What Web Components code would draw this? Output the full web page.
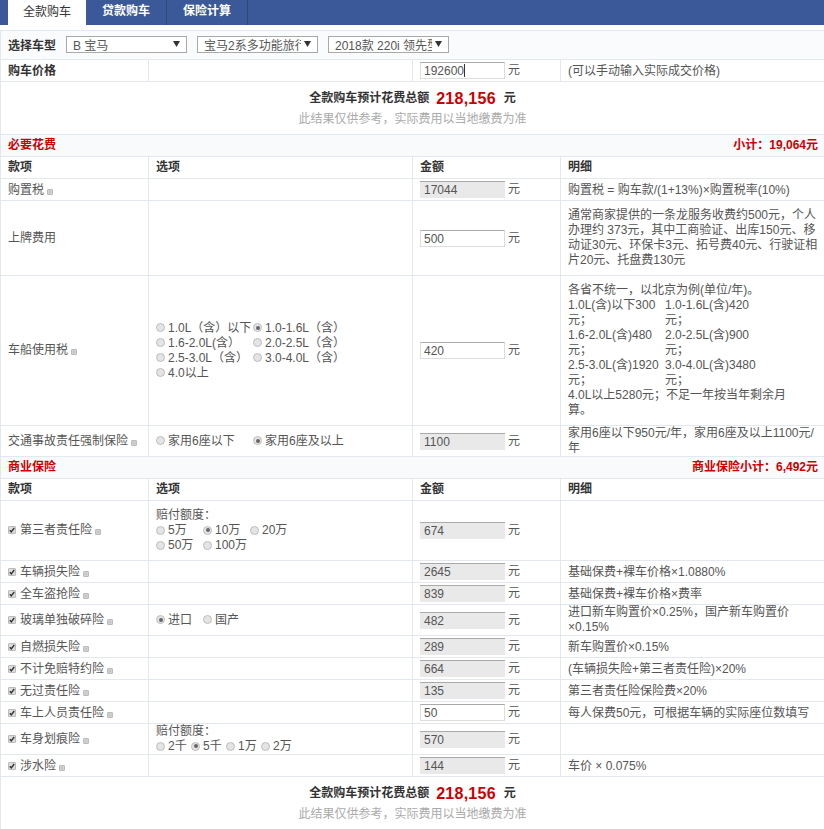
<!DOCTYPE html>
<html lang="zh"><head><meta charset="utf-8"><title>全款购车</title>
<style>
html,body{margin:0;padding:0;background:#fff}
body{width:824px;height:829px;overflow:hidden;font:12px/15px "Liberation Sans","Noto Sans CJK SC",sans-serif;color:#555}
b{color:#333}
x-row:not([h]):has(x-money) > [slot=a], x-row:not([h]):has(x-money) > [slot=d]{padding-top:2px}
</style></head><body>
<template id="t-row"><style>
:host{display:grid;grid-template-columns:148px 264px 148px 1fr;box-sizing:border-box;border-bottom:1px solid #e3e7ee;border-left:1px solid #e3e7ee;height:var(--h,22px)}
.c{display:flex;align-items:center;box-sizing:border-box;border-right:1px solid #e3e7ee;padding-left:7px;min-width:0}
.b{padding-left:7px}.m{padding-left:7px}.d{border-right:0;padding-left:7px;padding-right:4px}
</style><div class="c"><slot name="a"></slot></div><div class="c b"><slot name="b"></slot></div><div class="c m"><slot name="c"></slot></div><div class="c d"><slot name="d"></slot></div></template>

<template id="t-tabs"><style>
:host{display:flex;height:25px;background:#3b5998;padding-left:8px;margin-bottom:5px}
</style><slot></slot></template>
<template id="t-tab"><style>
:host{display:flex;box-sizing:border-box;width:81px;height:25px;padding:3px 0 0 16px;font-weight:bold;color:#fff;border-right:1px solid #2d4778;line-height:16px}
:host([active]){background:#fff;color:#333;font-weight:normal;width:78px;height:26px;border:0;padding:4px 0 0 15px}
</style><slot></slot></template>

<template id="t-select"><style>
:host{display:block;position:relative;box-sizing:border-box;width:121px;height:17px;background:#fff;border:1px solid #a9a9a9;overflow:hidden;color:#555}
.t{display:block;width:97px;height:15px;margin-left:6px;white-space:nowrap;overflow:hidden;line-height:18px;font-size:12px}
svg{position:absolute;right:6px;top:4px}
</style><span class="t"><slot></slot></span><svg width="7" height="6" viewBox="0 0 7 6"><path d="M0 0H7L3.5 6Z" fill="#333"/></svg></template>

<template id="t-pick"><style>
:host{display:flex;align-items:center;box-sizing:border-box;height:30px;border:solid #e3e7ee;border-width:1px 0 1px 1px;padding:0 0 1px 7px;background:#fafbfc;gap:10px}
.l{width:48px;white-space:nowrap;font-weight:bold;color:#333;padding-top:3px}
</style><span class="l"><slot name="label"></slot></span><slot></slot></template>

<template id="t-section"><style>
:host{display:flex;align-items:center;justify-content:space-between;box-sizing:border-box;height:22px;border-bottom:1px solid #e3e7ee;border-left:1px solid #e3e7ee;padding:0 6px 0 7px;background:#f8fafc;color:#c00;font-weight:bold}
</style><slot name="l"></slot><slot name="r"></slot></template>

<template id="t-total"><style>
:host{display:block;box-sizing:border-box;height:53px;border-bottom:1px solid #e3e7ee;border-left:1px solid #e3e7ee;text-align:center;padding-top:6px;background:#fff}
.top{display:flex;justify-content:center;align-items:center;height:20px;font-weight:bold;color:#333}
.num{font-size:16px;color:#c00;margin:0 8px 0 7px;letter-spacing:.25px}
.note{margin-top:4px;color:#aaa}
</style><div class="top"><span>全款购车预计花费总额</span><span class="num"><slot></slot></span><span>元</span></div><div class="note">此结果仅供参考，实际费用以当地缴费为准</div></template>

<template id="t-money"><style>
:host{display:flex;align-items:center;gap:3px}
.i{display:block;position:relative;box-sizing:border-box;width:85px;height:17px;padding:0 4px;line-height:16px;background:#e9e9e9;border-top:1px solid #aaa;color:#555}
:host([edit]) .i{background:#fff;border:1px solid #ddd;border-top-color:#aaa;padding:0 3px}
:host([caret]) .i::after{content:"";position:absolute;left:43px;top:1px;width:1px;height:13px;background:#333}
</style><span class="i"><slot></slot></span><span>元</span></template>

<template id="t-info"><style>
:host{display:inline-block;box-sizing:border-box;width:6px;height:6px;margin-left:3px;vertical-align:-1px;background:#c4c4c4;border:1px solid #bbb;border-radius:1px;box-shadow:inset 0 0 0 1px #d2d2d2}
</style></template>

<template id="t-check"><style>
:host{display:inline-flex;align-items:center;white-space:nowrap;gap:4px}
.b{display:block;box-sizing:border-box;width:8px;height:8px;margin-top:-1px;background:#ddd;border:1px solid #bbb;border-radius:1px;position:relative;flex:none}
svg{position:absolute;left:0;top:0}
</style><span class="b"><svg width="6" height="6" viewBox="0 0 6 6"><path d="M.8 3.2 2.3 4.8 5.2 1" fill="none" stroke="#333" stroke-width="1.4"/></svg></span><span><slot></slot></span></template>

<template id="t-radio"><style>
:host{display:flex;align-items:center;white-space:nowrap}
.r{display:block;box-sizing:border-box;width:9px;height:9px;margin-right:3px;margin-top:-1px;border:1px solid #bdbdbd;border-radius:50%;background:#e4e4e4;flex:none;position:relative}
:host([on]) .r::after{content:"";position:absolute;left:1.5px;top:1.5px;width:4px;height:4px;border-radius:50%;background:#666}
</style><span class="r"></span><span><slot></slot></span></template>

<template id="t-opts"><style>
:host{display:grid;grid-template-columns:repeat(var(--n,2),var(--w,97px));width:100%}
</style><slot></slot></template>

<x-tabs><x-tab active>全款购车</x-tab><x-tab>贷款购车</x-tab><x-tab>保险计算</x-tab></x-tabs>

<x-pick><span slot="label">选择车型</span><x-select>B 宝马</x-select><x-select>宝马2系多功能旅行车</x-select><x-select>2018款 220i 领先型</x-select></x-pick>

<x-row><b slot="a">购车价格</b><x-money slot="c" edit caret>192600</x-money><span slot="d">(可以手动输入实际成交价格)</span></x-row>
<x-total>218,156</x-total>

<x-section><span slot="l">必要花费</span><span slot="r">小计：19,064元</span></x-section>
<x-row><b slot="a">款项</b><b slot="b">选项</b><b slot="c">金额</b><b slot="d">明细</b></x-row>
<x-row><span slot="a">购置税<x-info></x-info></span><x-money slot="c">17044</x-money><span slot="d">购置税 = 购车款/(1+13%)×购置税率(10%)</span></x-row>
<x-row h="75"><span slot="a">上牌费用</span><x-money slot="c" edit>500</x-money><span slot="d">通常商家提供的一条龙服务收费约500元，个人办理约 373元，其中工商验证、出库150元、移动证30元、环保卡3元、拓号费40元、行驶证相片20元、托盘费130元</span></x-row>
<x-row h="150"><span slot="a">车船使用税<x-info></x-info></span>
<x-opts slot="b"><x-radio>1.0L（含）以下</x-radio><x-radio on>1.0-1.6L（含）</x-radio><x-radio>1.6-2.0L(含）</x-radio><x-radio>2.0-2.5L（含）</x-radio><x-radio>2.5-3.0L（含）</x-radio><x-radio>3.0-4.0L（含）</x-radio><x-radio>4.0以上</x-radio></x-opts>
<x-money slot="c" edit>420</x-money>
<span slot="d">各省不统一，以北京为例(单位/年)。<x-opts><span>1.0L(含)以下300元；</span><span>1.0-1.6L(含)420元；</span><span>1.6-2.0L(含)480元；</span><span>2.0-2.5L(含)900元；</span><span>2.5-3.0L(含)1920元；</span><span>3.0-4.0L(含)3480元；</span></x-opts>4.0L以上5280元；不足一年按当年剩余月<br>算。</span></x-row>
<x-row h="31"><span slot="a">交通事故责任强制保险<x-info></x-info></span><x-opts slot="b"><x-radio>家用6座以下</x-radio><x-radio on>家用6座及以上</x-radio></x-opts><x-money slot="c">1100</x-money><span slot="d">家用6座以下950元/年，家用6座及以上1100元/年</span></x-row>

<x-section><span slot="l">商业保险</span><span slot="r">商业保险小计：6,492元</span></x-section>
<x-row><b slot="a">款项</b><b slot="b">选项</b><b slot="c">金额</b><b slot="d">明细</b></x-row>
<x-row h="60"><x-check slot="a">第三者责任险<x-info></x-info></x-check><span slot="b">赔付额度：<x-opts style="--n:3;--w:47px"><x-radio>5万</x-radio><x-radio on>10万</x-radio><x-radio>20万</x-radio><x-radio>50万</x-radio><x-radio>100万</x-radio></x-opts></span><x-money slot="c">674</x-money></x-row>
<x-row><x-check slot="a">车辆损失险<x-info></x-info></x-check><x-money slot="c">2645</x-money><span slot="d">基础保费+裸车价格×1.0880%</span></x-row>
<x-row><x-check slot="a">全车盗抢险<x-info></x-info></x-check><x-money slot="c">839</x-money><span slot="d">基础保费+裸车价格×费率</span></x-row>
<x-row h="31"><x-check slot="a">玻璃单独破碎险<x-info></x-info></x-check><x-opts slot="b" style="--w:47px"><x-radio on>进口</x-radio><x-radio>国产</x-radio></x-opts><x-money slot="c">482</x-money><span slot="d">进口新车购置价×0.25%，国产新车购置价×0.15%</span></x-row>
<x-row><x-check slot="a">自燃损失险<x-info></x-info></x-check><x-money slot="c">289</x-money><span slot="d">新车购置价×0.15%</span></x-row>
<x-row><x-check slot="a">不计免赔特约险<x-info></x-info></x-check><x-money slot="c">664</x-money><span slot="d">(车辆损失险+第三者责任险)×20%</span></x-row>
<x-row><x-check slot="a">无过责任险<x-info></x-info></x-check><x-money slot="c">135</x-money><span slot="d">第三者责任险保险费×20%</span></x-row>
<x-row><x-check slot="a">车上人员责任险<x-info></x-info></x-check><x-money slot="c" edit>50</x-money><span slot="d">每人保费50元，可根据车辆的实际座位数填写</span></x-row>
<x-row h="31"><x-check slot="a">车身划痕险<x-info></x-info></x-check><span slot="b">赔付额度：<x-opts style="--n:4;--w:35px"><x-radio>2千</x-radio><x-radio on>5千</x-radio><x-radio>1万</x-radio><x-radio>2万</x-radio></x-opts></span><x-money slot="c">570</x-money></x-row>
<x-row><x-check slot="a">涉水险<x-info></x-info></x-check><x-money slot="c">144</x-money><span slot="d">车价 × 0.075%</span></x-row>
<x-total>218,156</x-total>

<script>
const names={'x-tabs':'t-tabs','x-tab':'t-tab','x-select':'t-select','x-pick':'t-pick','x-section':'t-section','x-total':'t-total','x-money':'t-money','x-info':'t-info','x-check':'t-check','x-radio':'t-radio','x-opts':'t-opts'};
class Base extends HTMLElement{
  constructor(id){super();this.attachShadow({mode:'open'}).appendChild(document.getElementById(id).content.cloneNode(true));}
}
for(const [tag,id] of Object.entries(names)){
  customElements.define(tag,class extends Base{constructor(){super(id);}});
}
customElements.define('x-row',class extends Base{
  constructor(){super('t-row');}
  connectedCallback(){const h=this.getAttribute('h');if(h)this.style.setProperty('--h',h+'px');}
});
</script>
</body></html>
